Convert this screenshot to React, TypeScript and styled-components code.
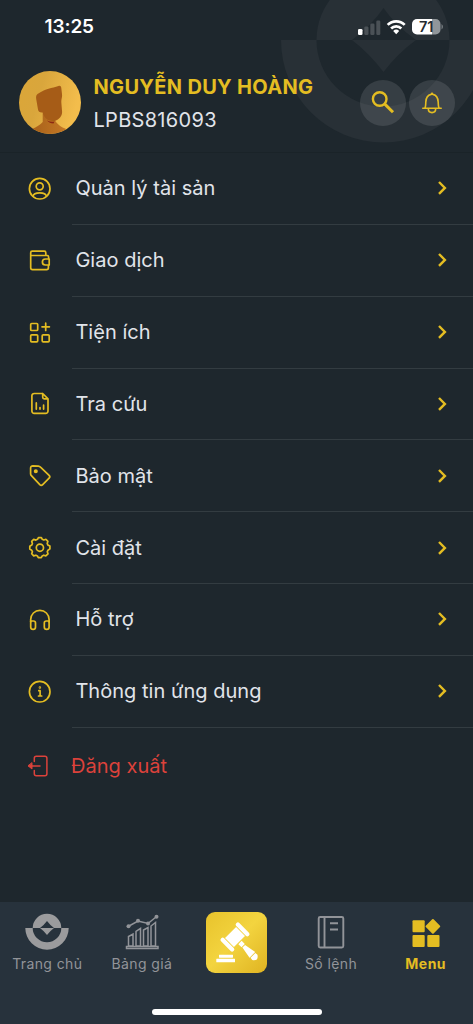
import React from "react";
import styled, { createGlobalStyle } from "styled-components";

const GlobalStyle = createGlobalStyle`
  * { box-sizing: border-box; }
  body { margin: 0; background: #1e272d; }
`;

const gold = "#e4bd22";

const Screen = styled.div`
  width: 473px;
  height: 1024px;
  display: flex;
  flex-direction: column;
  background: #1e272d;
  color: #e1e4ea;
  font-family: Inter, "Liberation Sans", sans-serif;
  overflow: hidden;
`;

const Header = styled.header`
  position: relative;
  height: 153px;
  flex: none;
  overflow: hidden;
  border-bottom: 1px solid #1a2328;
`;

const Watermark = styled.svg`
  position: absolute;
  top: 0;
  right: 0;
`;

const StatusBar = styled.div`
  position: relative;
  height: 54px;
  padding: 0 30px 0 44.5px;
  display: flex;
  align-items: center;
  justify-content: space-between;
`;

const Clock = styled.span`
  font-size: 19px;
  line-height: 24px;
  font-weight: 600;
  letter-spacing: -0.1px;
  color: #fff;
`;

const Profile = styled.div`
  position: relative;
  height: 98px;
  padding: 0 18px 0 19px;
  display: flex;
  align-items: center;
`;

const Identity = styled.div`
  flex: 1;
  margin-left: 12.5px;
  padding-top: 1px;
`;

const Name = styled.div`
  font-size: 20px;
  line-height: 33px;
  font-weight: 700;
  letter-spacing: 0.32px;
  color: ${gold};
  white-space: nowrap;
`;

const Account = styled.div`
  font-size: 20px;
  line-height: 33px;
  letter-spacing: 0.3px;
  white-space: nowrap;
`;

const Actions = styled.div`
  display: flex;
  gap: 3px;
`;

const RoundButton = styled.button`
  width: 46px;
  height: 46px;
  padding: 0;
  border: 0;
  border-radius: 50%;
  background: rgba(255, 255, 255, 0.11);
  display: grid;
  place-items: center;
`;

const List = styled.nav`
  flex: 1;
`;

const Row = styled.a`
  height: 71.85px;
  padding-left: 27px;
  display: flex;
  align-items: center;
`;

const RowBody = styled.div`
  flex: 1;
  align-self: stretch;
  margin-left: 19px;
  padding: 0 24px 0 3.4px;
  display: flex;
  align-items: center;
  justify-content: space-between;
  border-bottom: 1px solid #333c41;
`;

const Label = styled.span`
  font-size: 20px;
  line-height: 28px;
  letter-spacing: 0.03px;
  white-space: nowrap;
`;

const Logout = styled.a`
  height: 77px;
  padding-left: 26px;
  display: flex;
  align-items: center;
  gap: 19px;
  color: #dc423b;
`;

const TabBar = styled.footer`
  height: 122px;
  flex: none;
  display: flex;
  flex-direction: column;
  justify-content: space-between;
  align-items: center;
  padding-bottom: 9px;
  background: #27323c;
`;

const Tabs = styled.div`
  width: 100%;
  height: 80px;
  display: grid;
  grid-template-columns: repeat(5, 94.6px);
`;

const Tab = styled.a<{ $active?: boolean }>`
  display: flex;
  flex-direction: column;
  align-items: center;
  padding-top: 10px;
  color: ${(p) => (p.$active ? gold : "#929499")};
  font-size: 14px;
  line-height: 20px;
  font-weight: ${(p) => (p.$active ? 700 : 400)};
  letter-spacing: ${(p) => (p.$active ? 0.5 : 0.4)}px;
  white-space: nowrap;
`;

const TabIcon = styled.svg`
  width: 44px;
  height: 42px;
  flex: none;
`;

const Auction = styled.div`
  width: 61px;
  height: 61px;
  border-radius: 9px;
  background: linear-gradient(135deg, #e8c32c 0%, #f3d43f 48%, #dfb322 100%);
`;

const HomeIndicator = styled.div`
  width: 170px;
  height: 6px;
  border-radius: 3px;
  background: #fff;
`;

const LineIcon = ({ children, color = gold }: { children: React.ReactNode; color?: string }) => (
  <svg width="26" height="26" viewBox="0 0 26 26" fill="none" stroke={color} strokeWidth="1.7" strokeLinecap="round" strokeLinejoin="round">
    {children}
  </svg>
);

const icons: Record<string, React.ReactNode> = {
  user: (
    <>
      <circle cx="12.7" cy="12.7" r="10.3" />
      <circle cx="12.7" cy="10.3" r="3.5" />
      <path d="M6 20.2c.5-2.7 2.5-3.4 6.7-3.4s6.2.7 6.7 3.4" />
    </>
  ),
  wallet: (
    <>
      <path d="M18.8 7.500V4.700a1.500 1.500 0 0 0-1.500-1.500H5.200a1.500 1.500 0 0 0-1.500 1.500V7.500h16.400a1.500 1.500 0 0 1 1.500 1.500v1.300M3.700 7.500v12.300a1.800 1.800 0 0 0 1.800 1.800h14.100a1.800 1.800 0 0 0 1.800-1.800v-2.200" />
      <path d="M22.200 11h-3.800a3 3 0 0 0 0 6h3.800z" />
    </>
  ),
  grid: (
    <>
      <rect x="3.700" y="3.500" width="7" height="7" rx="1" />
      <rect x="3.700" y="14.800" width="7" height="7" rx="1" />
      <rect x="15.200" y="14.800" width="7" height="7" rx="1" />
      <path d="M18.700 3.200v7.300M15 6.800h7.400" />
    </>
  ),
  report: (
    <>
      <path d="M15.700 2.500H7.200a2.300 2.300 0 0 0-2.300 2.300v15.300a2.300 2.300 0 0 0 2.300 2.300h11.500a2.300 2.300 0 0 0 2.300-2.300V7.800L15.700 2.500v3.800a1.500 1.500 0 0 0 1.500 1.500H21" />
      <path d="M9.300 11.900v6.200M13 16.500v1.600M16.600 14.200v3.900" />
    </>
  ),
  tag: (
    <>
      <path d="M3.600 4.900v5.800c0 .8.3 1.500.8 2l8.400 8.900c.9.900 2 .9 2.900 0l6.400-6.400c.9-.9.900-2 0-2.900l-8.600-8.100c-.6-.6-1.300-1-2.200-1.100l-5.400-.3c-1.300 0-2.300.8-2.300 2.100z" />
      <circle cx="8.800" cy="8.300" r="1.200" fill={gold} />
    </>
  ),
  gear: (
    <>
      <circle cx="12.900" cy="12.700" r="3.600" />
      <path d="m10.500 4.300.9-1.700h3l.9 1.700 1.500.7 2.100-.7 2 2-.7 2.200.6 1.400 2.100 1.100v2.900L21 15.200l-.7 1.500.7 2.100-2.200 2.100-2.100-.7-1.500.7-.9 1.800h-3l-.9-1.800-1.500-.7-2.200.7-2-2.200.7-2-.8-1.500-1.800-1.100v-2.900l1.900-1.100.7-1.500-.7-2.200 2-2 2.200.7z" />
    </>
  ),
  headphones: (
    <>
      <path d="M3.700 14.800V12.500a9.200 9.200 0 0 1 18.400 0v2.300" />
      <path d="M3.700 14h2.800a2 2 0 0 1 2 2v3.900a2.400 2.400 0 0 1-4.800 0zM22.100 14h-2.800a2 2 0 0 0-2 2v3.900a2.400 2.400 0 0 0 4.800 0z" />
    </>
  ),
  info: (
    <>
      <circle cx="12.700" cy="12.700" r="10.300" />
      <path d="M11.800 11.700h1.300v5M11.500 17h3.200" />
      <circle cx="12.900" cy="8.500" r=".4" />
    </>
  ),
};

const entries = [
  { icon: "user", text: "Quản lý tài sản" },
  { icon: "wallet", text: "Giao dịch" },
  { icon: "grid", text: "Tiện ích" },
  { icon: "report", text: "Tra cứu" },
  { icon: "tag", text: "Bảo mật" },
  { icon: "gear", text: "Cài đặt" },
  { icon: "headphones", text: "Hỗ trợ" },
  { icon: "info", text: "Thông tin ứng dụng" },
];

const Chevron = () => (
  <svg width="14" height="16" viewBox="0 0 14 16" fill="none" stroke={gold} strokeWidth="2.400">
    <path d="m4 2 5.900 5.900L4 13.800" />
  </svg>
);

const Avatar = () => (
  <svg width="62" height="64" viewBox="0 0 62 64">
    <defs>
      <linearGradient id="coin" x1="0" x2="1" y1="0" y2=".3">
        <stop offset="0" stopColor="#dba638" />
        <stop offset=".4" stopColor="#d9a63c" />
        <stop offset="1" stopColor="#f3bd4c" />
      </linearGradient>
      <linearGradient id="shirt" x1="0" x2="1">
        <stop offset="0" stopColor="#a8611a" />
        <stop offset="1" stopColor="#c47825" />
      </linearGradient>
      <clipPath id="disc"><ellipse cx="31" cy="31.500" rx="31" ry="31.500" /></clipPath>
    </defs>
    <g clipPath="url(#disc)">
      <rect width="62" height="64" fill="url(#coin)" />
      <path d="M13 58q7-3 10.700-7V40h12.600v10q3 5 11 8v6H13z" fill="url(#shirt)" />
      <path d="M17.200 28c-.5-3 .3-5 3-6C26 18 33 17 39.500 15c1.800-.5 2.500.5 2.800 2l.8 7c0 3-.8 4-.8 7l.8 10c0 4-3 7.500-7 8.700-6 1-11-2-12.300-8.200-3 .3-4.500-1-4.800-3z" fill="#a65c17" />
      <path d="M28 49.500q4 2 7.500 1l-1 2q-4 0-6.500-3z" fill="#8c2812" />
    </g>
  </svg>
);

const Emblem = () => (
  <>
    <path fillRule="evenodd" d="M-14.300 0a14.300 14.300 0 0 1 28.600 0H7Q3-3 0-7Q-3-3-7 0z" />
    <path d="M-21.700 0h7.400a14.300 14.300 0 0 0 28.600 0h7.400a21.700 21.700 0 0 1-43.400 0z" />
    <path d="M-7 0H7Q3 3 0 7Q-3 3-7 0z" />
  </>
);

export default function App() {
  return (
    <>
      <GlobalStyle />
      <Screen>
        <Header>
          <Watermark width="200" height="152" viewBox="273 0 200 152" fill="#283036">
            <path d="M316.500 40a66.500 66.500 0 0 1 133 0H416Q395 25 383.500 8Q372 25 352 40z" />
            <path d="M281 40h35.500a66.500 66.500 0 0 0 133 0H486a102.500 102.500 0 0 1-205 0z" />
            <path d="M352 40h64Q398 53 383.500 72Q369 53 352 40z" />
          </Watermark>
          <StatusBar>
            <Clock>13:25</Clock>
            <svg width="86" height="18" viewBox="0 0 86 18">
              <rect x="1" y="11" width="4.500" height="6" rx="1.300" fill="#fff" />
              <g fill="#4a5156">
                <rect x="7.300" y="8.500" width="4.200" height="8.500" rx="1.300" />
                <rect x="13.300" y="5.500" width="4.200" height="11.500" rx="1.300" />
                <rect x="19.300" y="2.500" width="4" height="14.500" rx="1.300" />
              </g>
              <g fill="none" stroke="#fff" strokeWidth="2.700">
                <path d="M30.700 6.900a12 12 0 0 1 17 0" />
                <path d="M34.100 10.500a7.200 7.200 0 0 1 10.200 0" />
              </g>
              <path d="M36.200 13a4.300 4.300 0 0 1 6 0l-3 3.200z" fill="#fff" />
              <path d="M60 1h15v15.500H60a5 5 0 0 1-5-5V6a5 5 0 0 1 5-5z" fill="#fff" />
              <path d="M75 1h3.500a5 5 0 0 1 5 5v5.500a5 5 0 0 1-5 5H75z" fill="#91969a" />
              <path d="M84.500 6q1.500 1 1.500 2.700t-1.500 2.700z" fill="#777d81" />
              <text x="69.200" y="14" textAnchor="middle" fontSize="14.500" fontWeight="600" fill="#252b30">71</text>
            </svg>
          </StatusBar>
          <Profile>
            <Avatar />
            <Identity>
              <Name>NGUYỄN DUY HOÀNG</Name>
              <Account>LPBS816093</Account>
            </Identity>
            <Actions>
              <RoundButton aria-label="Tìm kiếm">
                <svg width="26" height="26" viewBox="0 0 26 26" fill="none" stroke={gold}>
                  <circle cx="9.700" cy="9" r="6.800" strokeWidth="2.400" />
                  <path d="m14.600 13.900 8.400 8.400" strokeWidth="3" />
                </svg>
              </RoundButton>
              <RoundButton aria-label="Thông báo">
                <svg width="26" height="26" viewBox="0 0 26 26" fill="none" stroke={gold} strokeWidth="1.600" strokeLinejoin="round" strokeLinecap="round">
                  <path d="M3.800 18.200h18.400M6 18c.8-1.500.7-3 .8-6 .2-4 2.600-7 5.200-7.600l1-1.200 1 1.200c2.600.6 5 3.600 5.200 7.600.1 3 0 4.500.8 6M9.300 18.500c0 5.500 7.400 5.500 7.400 0" />
                </svg>
              </RoundButton>
            </Actions>
          </Profile>
        </Header>

        <List>
          {entries.map((entry) => (
            <Row key={entry.icon}>
              <LineIcon>{icons[entry.icon]}</LineIcon>
              <RowBody>
                <Label>{entry.text}</Label>
                <Chevron />
              </RowBody>
            </Row>
          ))}
          <Logout>
            <LineIcon color="#dc423b">
              <path d="M8.300 8.500V5.300a2 2 0 0 1 2-2h8.600a2 2 0 0 1 2 2v15.400a2 2 0 0 1-2 2h-8.600a2 2 0 0 1-2-2v-3.200M14 13H3" strokeWidth="1.500" />
              <path d="M6 10v6l-3.700-3z" fill="#dc423b" strokeWidth="1" />
            </LineIcon>
            <Label>Đăng xuất</Label>
          </Logout>
        </List>

        <TabBar>
          <Tabs>
            <Tab>
              <TabIcon viewBox="0 0 44 42" fill="#9b9b9d">
                <g transform="translate(22 16)"><Emblem /></g>
              </TabIcon>
              Trang chủ
            </Tab>
            <Tab>
              <TabIcon viewBox="0 0 44 42" fill="none" stroke="#929499" strokeWidth="1.500">
                <path d="M6.500 34.500h31.500v2H6.500zM8.500 34v-9.500l4.500-2.500v12zM16 34V19.500l4.500-3V34zM23.500 34V18l4.500-2.500V34zM31 34V14l4.500-3.500V34z" />
                <path d="m9 14 9-5 10 2.500 8-6.500" />
                <g fill="#929499" stroke="none">
                  <circle cx="8.500" cy="14.300" r="2" />
                  <circle cx="18" cy="8.800" r="2" />
                  <circle cx="28" cy="11.500" r="2" />
                  <circle cx="36.500" cy="4.800" r="2" />
                </g>
              </TabIcon>
              Bảng giá
            </Tab>
            <Tab>
              <Auction>
                <svg width="61" height="61" viewBox="0 0 61 61" fill="#fff">
                  <g transform="translate(29 25) rotate(-45)">
                    <rect x="-7.800" y="-6.300" width="15.600" height="12.600" />
                    <rect x="-12.900" y="-8.800" width="4.300" height="17.600" rx="2" />
                    <rect x="8.600" y="-8.800" width="4.300" height="17.600" rx="2" />
                  </g>
                  <g transform="translate(34 30.500) rotate(-45)">
                    <path d="M-2.300 0h4.600v4.500h-4.600zM-1.900 5.300h3.800l2.100 12.200h-8zM-3.400 18.300h6.800l.3 2.700q-3.700 5.500-7.400 0z" />
                  </g>
                  <rect x="13" y="42.700" width="14" height="3" rx=".4" />
                  <rect x="10.300" y="46.700" width="18.700" height="3.600" rx=".4" />
                </svg>
              </Auction>
            </Tab>
            <Tab>
              <TabIcon viewBox="0 0 44 42" fill="none" stroke="#929499" strokeWidth="1.900">
                <rect x="9.700" y="5" width="24.600" height="30.500" rx="1.500" />
                <path d="M15.500 5v30.500M21 11.300h8M21 17.500h8" />
              </TabIcon>
              Sổ lệnh
            </Tab>
            <Tab $active>
              <TabIcon viewBox="0 0 44 42" fill={gold}>
                <rect x="8.500" y="8.300" width="12.200" height="12" rx="1" />
                <rect x="8.500" y="23" width="12.200" height="12" rx="1" />
                <rect x="23.300" y="23" width="12.200" height="12" rx="1" />
                <rect x="23.400" y="8.900" width="11" height="11" rx="1" transform="rotate(45 28.900 14.400)" />
              </TabIcon>
              Menu
            </Tab>
          </Tabs>
          <HomeIndicator />
        </TabBar>
      </Screen>
    </>
  );
}
